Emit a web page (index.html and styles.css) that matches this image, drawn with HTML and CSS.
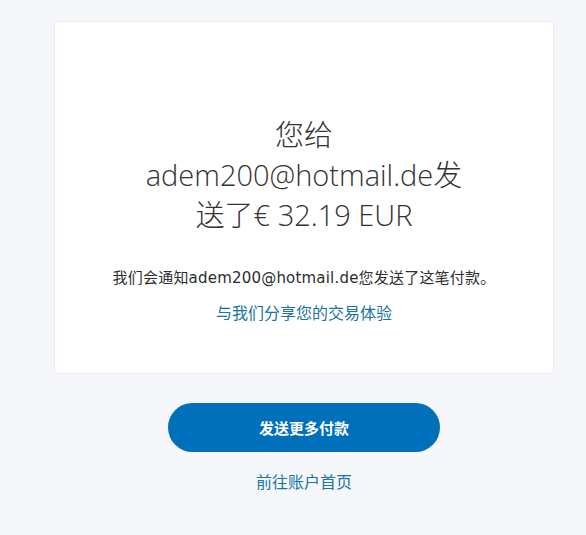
FILE: index.html
```html
<!DOCTYPE html>
<html lang="zh-CN">
<head>
  <meta charset="UTF-8" />
  <meta name="viewport" content="width=device-width, initial-scale=1.0"/>
  <title>付款已发送</title>
  <link rel="stylesheet" href="styles.css">
</head>
<body>
  <div class="page">
    <div class="card">
      <h1 class="headline">您给 adem200@hotmail.de发送了€ 32.19 EUR</h1>
      <p class="note">我们会通知adem200@hotmail.de您发送了这笔付款。</p>
      <a class="link" href="#">与我们分享您的交易体验</a>
    </div>
    <div class="actions">
      <button class="btn-primary">发送更多付款</button>
      <a class="link link-home" href="#">前往账户首页</a>
    </div>
  </div>
</body>
</html>
```

FILE: styles.css
```css
:root {
  --bg: #f5f7fa;
  --card: #ffffff;
  --border: #eaedf1;
  --text: #2c2e2f;
  --link: #1a74a2;
  --blue: #0070ba;
}
html, body {
  margin: 0;
  padding: 0;
  background: var(--bg);
  color: var(--text);
  font-family: "Open Sans", "Noto Sans CJK SC", sans-serif;
}
.page {
  width: 498px;
  margin: 22px 0 0 55px;
}
.card {
  background: var(--card);
  box-shadow: 0 0 0 1px var(--border);
  padding: 93px 24px 49px;
  text-align: center;
  display: flex;
  flex-direction: column;
  align-items: center;
}
.headline {
  max-width: 340px;
  margin: 0 0 33px;
  font-size: 29px;
  line-height: 40px;
  font-weight: 300;
  color: #333;
}
.note {
  margin: 0 0 14px;
  font-family: "DejaVu Sans", "Noto Sans CJK SC", sans-serif;
  font-size: 15px;
  letter-spacing: 0.2px;
  line-height: 20px;
}
.link {
  color: var(--link);
  text-decoration: none;
  font-size: 16px;
  line-height: 22px;
}
.actions {
  display: flex;
  flex-direction: column;
  align-items: center;
  padding-top: 30px;
}
.btn-primary {
  width: 272px;
  height: 49px;
  border: none;
  border-radius: 25px;
  background: var(--blue);
  color: #fff;
  font-family: inherit;
  font-size: 15px;
  font-weight: 700;
  cursor: pointer;
  margin-bottom: 19px;
}
.link-home {
  font-size: 16px;
}
```
